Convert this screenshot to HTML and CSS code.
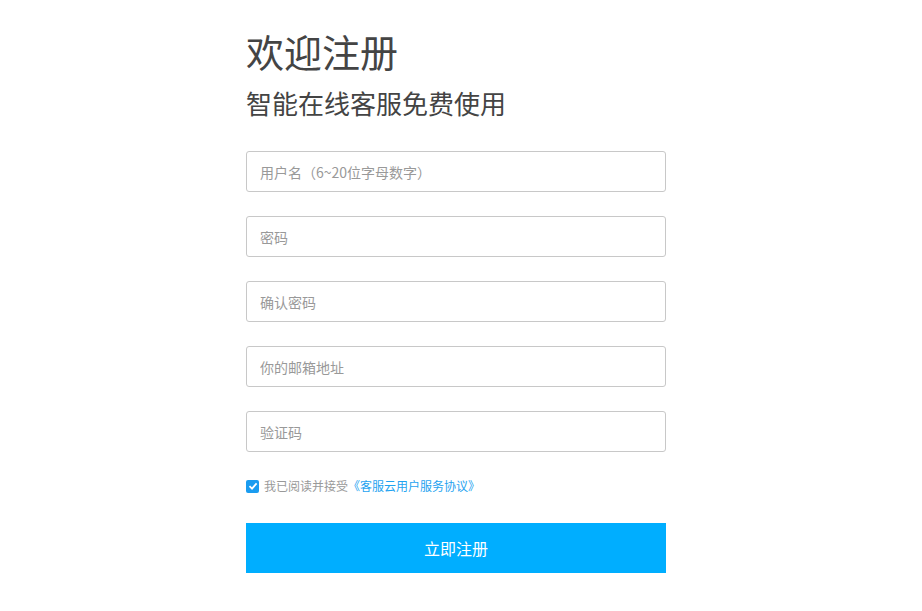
FILE: index.html
```html
<!DOCTYPE html>
<html lang="zh-CN">
<head>
    <meta charset="UTF-8">
    <meta name="viewport" content="width=device-width, initial-scale=1.0">
    <title>欢迎注册</title>
    <link rel="stylesheet" href="styles.css">
</head>
<body>
    <div class="register">
        <h1>欢迎注册</h1>
        <h2>智能在线客服免费使用</h2>
        <form class="reg-form">
            <input type="text" placeholder="用户名（6~20位字母数字）">
            <input type="password" placeholder="密码">
            <input type="password" placeholder="确认密码">
            <input type="text" placeholder="你的邮箱地址">
            <input type="text" placeholder="验证码">
            <label class="agree">
                <span class="check">
                    <svg width="10" height="10" viewBox="0 0 10 10"><path d="M1.5 5.2 L4 7.6 L8.6 2.4" fill="none" stroke="#fff" stroke-width="1.8"/></svg>
                </span>
                <span>我已阅读并接受<a href="#">《客服云用户服务协议》</a></span>
            </label>
            <button type="submit">立即注册</button>
        </form>
    </div>
</body>
</html>
```
FILE: styles.css
```css
/* General */
body {
    margin: 0;
    background: #fff;
    font-family: "Noto Sans CJK SC", "Noto Sans", sans-serif;
    color: #444;
}

.register {
    width: 420px;
    margin-left: calc(50% - 215px);
    padding-top: 24px;
}

h1 {
    margin: 0;
    font-size: 38px;
    font-weight: 400;
    line-height: 54px;
    color: #444;
}

h2 {
    margin: 7px 0 0;
    font-size: 26px;
    font-weight: 400;
    line-height: 36px;
    color: #444;
}

/* Form */
.reg-form {
    display: flex;
    flex-direction: column;
    gap: 24px;
    margin-top: 30px;
}

.reg-form input {
    box-sizing: border-box;
    height: 41px;
    width: 100%;
    padding: 0 13px;
    border: 1px solid #c8c8c8;
    border-radius: 3px;
    font-family: inherit;
    font-size: 14px;
    color: #333;
    outline: none;
}

.reg-form input::placeholder {
    color: #999;
}

.agree {
    display: flex;
    align-items: center;
    gap: 5px;
    margin-top: 2px;
    font-size: 12px;
    line-height: 16px;
    color: #999;
}

.agree a {
    color: #1fa3f0;
    text-decoration: none;
}

.check {
    display: flex;
    align-items: center;
    justify-content: center;
    width: 13px;
    height: 13px;
    border-radius: 2px;
    background: #1a9cf0;
}

.reg-form button {
    height: 50px;
    margin-top: 5px;
    border: none;
    background: #00aeff;
    color: #fff;
    font-family: inherit;
    font-size: 16px;
    cursor: pointer;
}
```
